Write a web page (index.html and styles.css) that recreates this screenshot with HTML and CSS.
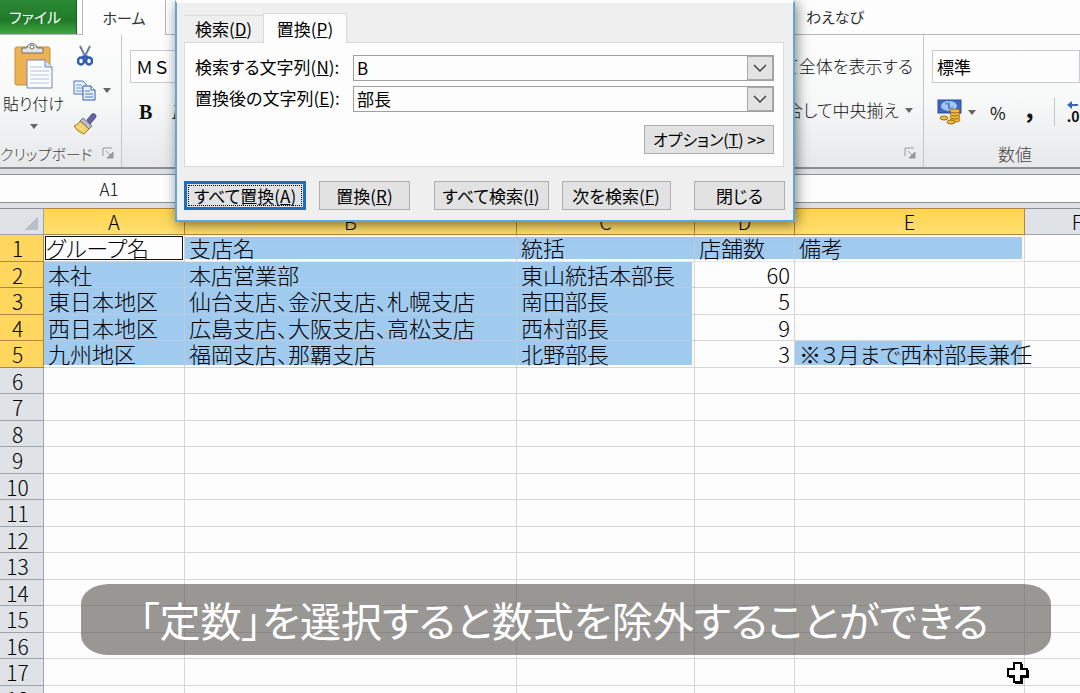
FILE: index.html
```
<!DOCTYPE html>
<html lang="ja">
<head>
  <meta charset="UTF-8">
  <meta name="viewport" content="width=device-width, initial-scale=1.0">
  <title>検索と置換</title>
  <link rel="stylesheet" href="styles.css">
</head>
<body>

  <!-- Ribbon tabs -->
  <nav class="tabs">
    <button class="file-tab">ファイル</button>
    <button class="home-tab">ホーム</button>
    <button class="user-tab">わえなび</button>
  </nav>

  <!-- Ribbon -->
  <div class="ribbon">
    <section class="group clipboard">
      <div class="group-body">
        <button class="paste">
          <svg width="40" height="48" viewBox="0 0 40 48">
            <rect x="1" y="5" width="35" height="38" rx="2" fill="#efb253" stroke="#c98f3c"/>
            <path d="M8 11V6h5c0-6 10-6 10 0h6v5z" fill="#e4e4e4" stroke="#6d6d6d"/>
            <circle cx="18" cy="5" r="2" fill="#fff" stroke="#6d6d6d"/>
            <path d="M13 18h18l7 7v21H13z" fill="#fbfcff" stroke="#7385ab"/>
            <path d="M31 18v7h7" fill="#dce4f3" stroke="#7385ab"/>
            <path d="M16 25h12M16 29h19M16 33h19M16 37h19M16 41h19" stroke="#b4c0da"/>
          </svg>
          <span>貼り付け</span>
          <i class="arrow"></i>
        </button>
        <div class="clip-tools">
          <button aria-label="切り取り">
            <svg width="16" height="22" viewBox="0 0 16 22" fill="none">
              <path d="M3 1l6 12M13 1L7 13" stroke="#6f7f99" stroke-width="2"/>
              <ellipse cx="4" cy="16" rx="3" ry="3.5" stroke="#2f5cb5" stroke-width="2.5"/>
              <ellipse cx="12" cy="16" rx="3" ry="3.5" stroke="#2f5cb5" stroke-width="2.5"/>
              <path d="M5 12h6" stroke="#2f5cb5" stroke-width="3"/>
            </svg>
          </button>
          <button aria-label="コピー">
            <svg width="24" height="21" viewBox="0 0 24 21">
              <path d="M1 1h9l3 3v10H1z" fill="#e9f1fd" stroke="#4a72bd"/>
              <path d="M3 5h6M3 8h8M3 11h8" stroke="#6d97da"/>
              <path d="M10 6h8l4 4v10H10z" fill="#e9f1fd" stroke="#2d5bb0"/>
              <path d="M18 6v4h4" fill="#fff" stroke="#2d5bb0"/>
              <path d="M12 11h5M12 14h8M12 17h8" stroke="#4a7bcd"/>
            </svg>
            <i class="arrow"></i>
          </button>
          <button aria-label="書式のコピー">
            <svg width="24" height="22" viewBox="0 0 24 22">
              <path d="M14 7l5-6q4-1 4 3l-6 7z" fill="#6661a8" stroke="#4d4788"/>
              <path d="M10 5l9 8-3 3-9-8z" fill="#b9bccb" stroke="#6f7189"/>
              <path d="M7 8l9 8-5 5Q4 19 1 13q4-1 6-5z" fill="#f2cf63" stroke="#a17c27"/>
              <path d="M4 13l6 4M7 11l5 5" stroke="#fff3bd"/>
            </svg>
          </button>
        </div>
      </div>
      <div class="group-label"><span>クリップボード</span>
        <svg class="launcher" width="12" height="12" viewBox="0 0 12 12"><path d="M1 9V1h9" fill="none" stroke="#999"/><path d="M4 4l4 4M11 5v6H5z" fill="#999" stroke="#999"/></svg>
      </div>
    </section>

    <section class="group font">
      <input class="font-name" value="ＭＳ Ｐゴシック" aria-label="フォント">
      <div class="font-tools"><button class="bold">B</button><button class="italic">I</button></div>
    </section>

    <section class="group align">
      <div class="align-tools">
        <button>て全体を表示する</button>
        <button class="merge">合して中央揃え<i class="arrow"></i></button>
      </div>
      <div class="group-label">
        <svg class="launcher" width="12" height="12" viewBox="0 0 12 12"><path d="M1 9V1h9" fill="none" stroke="#999"/><path d="M4 4l4 4M11 5v6H5z" fill="#999" stroke="#999"/></svg>
      </div>
    </section>

    <section class="group number">
      <input class="number-format" value="標準" aria-label="表示形式">
      <div class="number-tools">
        <button class="currency" aria-label="通貨">
          <svg width="25" height="26" viewBox="0 0 25 26">
            <rect x="1" y="1" width="23" height="13" fill="#3d68bd" stroke="#284e99"/>
            <ellipse cx="12" cy="7" rx="8" ry="5" fill="#a5c5f3"/>
            <path d="M8 5q3-2 4 2t4 1M12 3v8" fill="none" stroke="#3866b4"/>
            <g fill="#f3bd36" stroke="#9c6a13">
              <ellipse cx="18" cy="21" rx="5" ry="2"/>
              <ellipse cx="18" cy="18" rx="5" ry="2"/>
              <ellipse cx="18" cy="15" rx="5" ry="2"/>
              <ellipse cx="18" cy="12" rx="5" ry="2"/>
              <ellipse cx="7" cy="19" rx="4" ry="2"/>
              <ellipse cx="14" cy="23" rx="4" ry="2"/>
            </g>
          </svg>
          <i class="arrow"></i>
        </button>
        <button class="percent">%</button>
        <button class="comma" aria-label="桁区切り">,</button>
        <button class="decimal" aria-label="小数点以下の表示桁数を増やす">
          <svg width="12" height="8" viewBox="0 0 12 8"><path d="M0 4l5-4v3h6v2H5v3z" fill="#3a63b8"/></svg>
          <span>.0</span>
        </button>
      </div>
      <div class="group-label"><span>数値</span></div>
    </section>
  </div>

  <!-- Formula bar -->
  <div class="formula-bar">
    <input class="name-box" value="A1" aria-label="名前ボックス">
    <input class="formula" aria-label="数式">
  </div>

  <!-- Sheet -->
  <table class="sheet">
    <colgroup>
      <col class="c-no"><col class="c-a"><col class="c-b"><col class="c-c"><col class="c-d"><col class="c-e"><col class="c-f">
    </colgroup>
    <thead>
      <tr><th class="corner"></th><th class="on">A</th><th class="on">B</th><th class="on">C</th><th class="on">D</th><th class="on">E</th><th>F</th></tr>
    </thead>
    <tbody>
      <tr class="first"><th class="on">1</th><td class="active">グループ名</td><td class="sel">支店名</td><td class="sel">統括</td><td class="sel">店舗数</td><td class="sel end">備考</td><td></td></tr>
      <tr><th class="on">2</th><td class="sel">本社</td><td class="sel">本店営業部</td><td class="sel end">東山統括本部長</td><td class="num">60</td><td></td><td></td></tr>
      <tr><th class="on">3</th><td class="sel">東日本地区</td><td class="sel">仙台支店、金沢支店、札幌支店</td><td class="sel end">南田部長</td><td class="num">5</td><td></td><td></td></tr>
      <tr><th class="on">4</th><td class="sel">西日本地区</td><td class="sel">広島支店、大阪支店、高松支店</td><td class="sel end">西村部長</td><td class="num">9</td><td></td><td></td></tr>
      <tr class="last"><th class="on">5</th><td class="sel">九州地区</td><td class="sel">福岡支店、那覇支店</td><td class="sel end">北野部長</td><td class="num">3</td><td class="sel end">※３月まで西村部長兼任</td><td></td></tr>
      <tr><th>6</th><td></td><td></td><td></td><td></td><td></td><td></td></tr>
      <tr><th>7</th><td></td><td></td><td></td><td></td><td></td><td></td></tr>
      <tr><th>8</th><td></td><td></td><td></td><td></td><td></td><td></td></tr>
      <tr><th>9</th><td></td><td></td><td></td><td></td><td></td><td></td></tr>
      <tr><th>10</th><td></td><td></td><td></td><td></td><td></td><td></td></tr>
      <tr><th>11</th><td></td><td></td><td></td><td></td><td></td><td></td></tr>
      <tr><th>12</th><td></td><td></td><td></td><td></td><td></td><td></td></tr>
      <tr><th>13</th><td></td><td></td><td></td><td></td><td></td><td></td></tr>
      <tr><th>14</th><td></td><td></td><td></td><td></td><td></td><td></td></tr>
      <tr><th>15</th><td></td><td></td><td></td><td></td><td></td><td></td></tr>
      <tr><th>16</th><td></td><td></td><td></td><td></td><td></td><td></td></tr>
      <tr><th>17</th><td></td><td></td><td></td><td></td><td></td><td></td></tr>
      <tr><th>18</th><td></td><td></td><td></td><td></td><td></td><td></td></tr>
    </tbody>
  </table>

  <!-- Find and replace -->
  <div class="dialog" role="dialog">
    <div class="dialog-tabs">
      <button>検索(<u>D</u>)</button>
      <button class="current">置換(<u>P</u>)</button>
    </div>
    <div class="panel">
      <div class="field">
        <label for="find">検索する文字列(<u>N</u>):</label>
        <div class="combo">
          <input id="find" value="B">
          <button aria-label="履歴"><svg width="14" height="8" viewBox="0 0 14 8"><path d="M1 1l6 6 6-6" fill="none" stroke="#444" stroke-width="1.5"/></svg></button>
        </div>
      </div>
      <div class="field">
        <label for="replace">置換後の文字列(<u>E</u>):</label>
        <div class="combo">
          <input id="replace" value="部長">
          <button aria-label="履歴"><svg width="14" height="8" viewBox="0 0 14 8"><path d="M1 1l6 6 6-6" fill="none" stroke="#444" stroke-width="1.5"/></svg></button>
        </div>
      </div>
      <button class="btn options">オプション(<u>T</u>) &gt;&gt;</button>
    </div>
    <div class="actions">
      <div>
        <button class="btn replace-all">すべて置換(<u>A</u>)</button>
        <button class="btn small">置換(<u>R</u>)</button>
      </div>
      <div>
        <button class="btn find-all">すべて検索(<u>I</u>)</button>
        <button class="btn find-next">次を検索(<u>F</u>)</button>
      </div>
      <div>
        <button class="btn small">閉じる</button>
      </div>
    </div>
  </div>

  <p class="caption">「定数」を選択すると数式を除外することができる</p>

  <svg class="cursor" width="24" height="24" viewBox="0 0 24 24">
    <path d="M9 3h8v6h6v8h-6v6H9v-6H3V9h6z" fill="#000"/>
    <path d="M8 2h7v6h6v7h-6v6H8v-6H2V8h6z" fill="#fff" stroke="#000" stroke-width="2"/>
  </svg>

</body>
</html>
```
FILE: styles.css
```
* {
  box-sizing: border-box;
}

body {
  margin: 0;
  height: 100vh;
  overflow: hidden;
  position: relative;
  background: #fdfdfd;
  color: #000;
  font-family: "Noto Sans CJK JP", sans-serif;
  font-size: 17px;
  font-weight: 300;
  font-feature-settings: "palt";
}

button,
input {
  margin: 0;
  padding: 0;
  border: 0;
  background: none;
  color: inherit;
  font: inherit;
  font-feature-settings: inherit;
  border-radius: 0;
  white-space: nowrap;
}

input {
  min-width: 0;
}

svg {
  display: block;
  flex: none;
}

.arrow {
  border: 4px solid transparent;
  border-top: 5px solid #666;
  border-bottom: 0;
}

/* ribbon tabs */
.tabs {
  display: flex;
  height: 35px;
  border-bottom: 1px solid #b4b7bb;
  color: #333;
  font-size: 15px;
  font-weight: 400;
}

.tabs button {
  height: 34px;
  line-height: 30px;
}

.tabs .file-tab {
  width: 77px;
  padding-right: 6px;
  color: #fff;
  background: linear-gradient(#2c8a35, #1f7a29 60%, #3fa83f);
  border-right: 1px solid #176320;
}

.tabs .home-tab {
  width: 84px;
  height: 35px;
  margin-left: 5px;
  background: #fdfdfd;
  border-left: 1px solid #b4b7bb;
  border-right: 1px solid #b4b7bb;
}

.tabs .user-tab {
  margin-left: auto;
  margin-right: 216px;
}

/* ribbon */
.ribbon {
  display: flex;
  height: 134px;
  border-bottom: 2px solid #8b9097;
  background: linear-gradient(#fdfdfd, #f7f8f8 50%, #e6e8ea);
  color: #111;
}

.group {
  display: flex;
  flex-direction: column;
  border-right: 1px solid #c3c6ca;
}

.group-body {
  display: flex;
  flex: 1;
}

.group-label {
  display: flex;
  align-items: center;
  justify-content: flex-end;
  height: 28px;
  margin-top: auto;
  padding-right: 7px;
  color: #444;
  white-space: nowrap;
}

.clipboard {
  width: 122px;
}

.clipboard .group-label {
  justify-content: space-between;
  font-size: 15px;
}

.paste {
  display: flex;
  flex-direction: column;
  align-items: center;
  width: 67px;
  padding-top: 7px;
  line-height: 27px;
  font-size: 16px;
}

.paste .arrow {
  margin-top: 7px;
}

.clip-tools {
  display: flex;
  flex-direction: column;
  gap: 12px;
  padding: 10px 0 0 6px;
}

.clip-tools button {
  display: flex;
  align-items: center;
  gap: 6px;
  height: 22px;
}

.clip-tools button:first-child {
  padding-left: 4px;
}

.font {
  flex: 1;
  padding: 15px 0 0 8px;
}

.font-name,
.number-format {
  flex: none;
  height: 33px;
  border: 1px solid #c9cbce;
  background: #fdfdfd;
  color: #000;
  font-weight: 400;
}

.font-name {
  width: 200px;
  padding-left: 5px;
  font-feature-settings: normal;
}

.font-tools {
  display: flex;
  gap: 20px;
  padding: 16px 0 0 9px;
  line-height: 26px;
}

.bold,
.italic {
  font-family: "Liberation Serif", serif;
  font-size: 20px;
  font-weight: bold;
}

.italic {
  font-style: italic;
}

.align {
  width: 260px;
}

.align-tools {
  display: flex;
  flex-direction: column;
  align-items: flex-end;
  gap: 18px;
  padding: 18px 10px 0 0;
}

.align-tools button {
  line-height: 26px;
}

.merge {
  display: flex;
  align-items: center;
  gap: 6px;
}

.number {
  width: 156px;
  border-right: 0;
  padding: 15px 0 0 8px;
}

.number-format {
  padding-left: 4px;
}

.number-tools {
  display: flex;
  align-items: center;
  height: 28px;
  margin-top: 15px;
  padding-left: 5px;
}

.currency {
  display: flex;
  align-items: center;
  gap: 6px;
}

.percent {
  margin-left: 14px;
  font-weight: 400;
}

.comma {
  width: 48px;
  font-size: 22px;
  font-weight: 900;
  line-height: 20px;
  padding-bottom: 8px;
}

.decimal {
  height: 28px;
  padding-left: 12px;
  border-left: 1px solid #c3c6ca;
  font-size: 14px;
  font-weight: bold;
  line-height: 14px;
}

.number .group-label {
  justify-content: center;
  padding-right: 0;
  padding-left: 18px;
}

/* formula bar */
.formula-bar {
  display: flex;
  height: 39px;
  padding: 5px 0;
  background: #dde1e6;
}

.formula-bar input {
  height: 29px;
  background: #fdfdfd;
  border-top: 1px solid #8b9097;
  border-bottom: 1px solid #8b9097;
}

.name-box {
  width: 218px;
  text-align: center;
}

.formula {
  flex: 1;
}

/* sheet */
.sheet {
  width: 1130px;
  table-layout: fixed;
  border-collapse: separate;
  border-spacing: 0;
  font-size: 22px;
  line-height: 22px;
}

.c-no { width: 44px; }
.c-a { width: 141px; }
.c-b { width: 332px; }
.c-c { width: 178px; }
.c-d { width: 100px; }
.c-e { width: 230px; }
.c-f { width: 105px; }

.sheet tr {
  height: 26px;
}

.sheet thead tr {
  height: 27px;
}

.sheet tbody tr:nth-child(odd) {
  height: 27px;
}

.sheet th {
  padding: 0;
  font-size: 20px;
  font-weight: 300;
  background: #dfe3e7;
  border-right: 1px solid #9da4ac;
  border-bottom: 1px solid #9da4ac;
}

.sheet tbody th {
  padding-right: 8px;
  font-size: 21px;
}

.sheet thead th {
  border-top: 1px solid #8b9097;
}

.sheet th.on {
  background: #ffd75f;
  border-color: #b1873a;
}

.sheet thead th.on {
  background: linear-gradient(#ffd34f, #ffe070);
}

.sheet .corner {
  background: linear-gradient(135deg, transparent 50%, #b9bfc6 50%) 25px 8px / 13px 13px no-repeat #dfe3e7;
}

.sheet td {
  padding: 0 4px 2px;
  border-right: 1px solid #d5d6d8;
  border-bottom: 1px solid #d5d6d8;
  white-space: nowrap;
}

.sheet td.num {
  text-align: right;
}

.sheet td.sel {
  background: #a0caee;
  border-color: #b9cbe4;
}

.sheet td.end {
  border-right-color: #d5d6d8;
  box-shadow: inset -2px 0 #fdfdfd;
}

.sheet .last td.sel {
  border-bottom-color: #d5d6d8;
  box-shadow: inset 0 -2px #fdfdfd;
}

.sheet .last td.end {
  box-shadow: inset -2px -2px #fdfdfd;
}

.sheet .first td.sel {
  border-bottom-color: #e4e8f0;
  box-shadow: inset 0 2px #fdfdfd, inset 0 -2px #fdfdfd;
}

.sheet .first td.end {
  box-shadow: inset 0 2px #fdfdfd, inset -2px -2px #fdfdfd;
}

.sheet td.active {
  padding: 0 2px 2px;
  box-shadow: inset 0 0 0 1px #fdfdfd, inset 0 0 0 2px #111;
}

/* find and replace dialog */
.dialog {
  position: absolute;
  top: 0;
  left: 175px;
  width: 620px;
  padding: 13px 8px 10px 7px;
  background: #efefef;
  border: 2px solid #5aa9dc;
  border-top: 3px solid #fdfdfd;
  box-shadow: 2px 3px 12px rgba(0, 0, 0, 0.5);
  color: #000;
  font-weight: 400;
}

.dialog-tabs {
  display: flex;
  align-items: flex-end;
  height: 26px;
}

.dialog-tabs button {
  width: 79px;
  height: 27px;
  line-height: 24px;
  border-top: 1px solid #d9d9d9;
}

.dialog-tabs .current {
  position: relative;
  z-index: 1;
  width: 84px;
  height: 30px;
  margin-bottom: -1px;
  background: #fdfdfd;
  border: 1px solid #d9d9d9;
  border-bottom: 0;
}

.panel {
  display: flex;
  flex-direction: column;
  gap: 5px;
  height: 125px;
  margin-right: 1px;
  padding: 12px 9px 0 10px;
  background: #fdfdfd;
  border: 1px solid #d9d9d9;
}

.field {
  display: flex;
  align-items: center;
  height: 26px;
}

.field label {
  width: 158px;
  padding-bottom: 2px;
  line-height: 24px;
  white-space: nowrap;
}

.combo {
  display: flex;
  flex: 1;
  height: 26px;
  border: 1px solid #a0a0a0;
}

.combo input {
  flex: 1;
  padding: 0 0 2px 3px;
}

.combo button {
  display: flex;
  align-items: center;
  justify-content: center;
  width: 26px;
  background: #e3e3e3;
  border: 1px solid #a8a8a8;
}

.btn {
  height: 29px;
  line-height: 25px;
  background: #e2e2e2;
  border: 1px solid #adadad;
}

.options {
  align-self: flex-end;
  width: 130px;
  margin-top: 8px;
  font-size: 16px;
}

.actions {
  display: flex;
  justify-content: space-between;
  padding-top: 14px;
}

.actions div {
  display: flex;
  gap: 13px;
}

.small { width: 91px; }
.find-all { width: 115px; }
.find-next { width: 109px; }

.replace-all {
  width: 122px;
  border: 3px solid #1a70c0;
  line-height: 21px;
  outline: 1px dotted #000;
  outline-offset: -5px;
}

/* caption */
.caption {
  position: absolute;
  top: 584px;
  left: 81px;
  right: 29px;
  margin: 0;
  padding: 0 4px 0 0;
  border-radius: 28px / 20px;
  background: rgba(90, 88, 84, 0.62);
  color: #fff;
  font-size: 41px;
  font-weight: 400;
  line-height: 71px;
  text-align: center;
  white-space: nowrap;
}

.cursor {
  position: absolute;
  top: 661px;
  left: 1006px;
}
```
